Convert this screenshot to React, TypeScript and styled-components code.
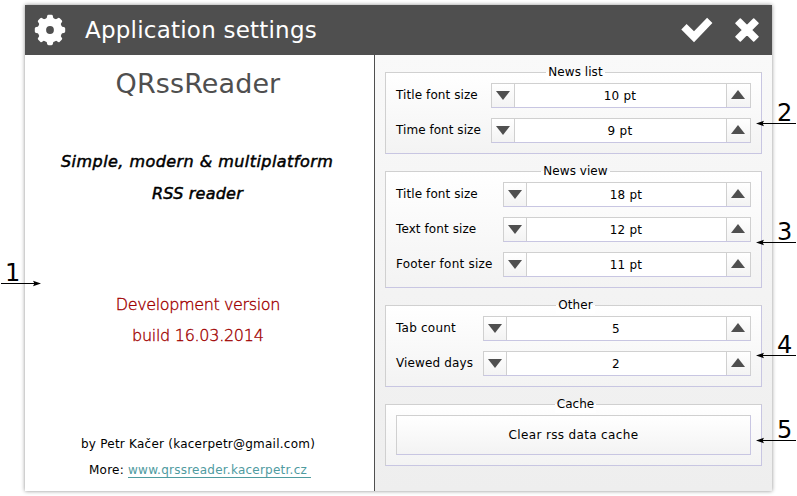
import React from "react";
import styled, { createGlobalStyle } from "styled-components";

const GlobalStyle = createGlobalStyle`
  * { box-sizing: border-box; }
  html, body { margin: 0; padding: 0; background: #fff; overflow: hidden; }
  body { font-family: "DejaVu Sans", sans-serif; font-size: 12px; color: #000; }
`;

const Page = styled.div`
  position: relative;
  width: 797px;
  height: 496px;
  padding: 5px 25px;
`;

const Window = styled.main`
  width: 747px;
  height: 486px;
  display: flex;
  flex-direction: column;
  box-shadow: 0 0 4px rgba(0, 0, 0, 0.45);
`;

const Header = styled.header`
  height: 50px;
  flex: none;
  display: flex;
  align-items: center;
  background: #4f4f4f;
  padding: 0 12px 0 9px;
`;

const Title = styled.h1`
  flex: 1;
  margin: 0 0 0 19px;
  color: #fff;
  font-size: 23px;
  line-height: 50px;
  font-weight: 400;
  white-space: nowrap;
  letter-spacing: 0.22px;
`;

const HeaderActions = styled.div`
  display: flex;
  align-items: center;
  gap: 21px;
`;

const Body = styled.div`
  flex: 1;
  display: flex;
`;

const About = styled.section`
  width: 350px;
  background: #fff;
  border-right: 1px solid #4f4f4f;
  display: flex;
  flex-direction: column;
`;

const AboutLine = styled.p<{
  $size: number;
  $height: number;
  $left: number;
  $top?: number;
  $color?: string;
  $spacing?: number;
  $variant?: "slogan" | "light";
}>`
  margin: ${(p) => p.$top ?? 0}px 0 0;
  padding-left: ${(p) => p.$left}px;
  font-size: ${(p) => p.$size}px;
  line-height: ${(p) => p.$height}px;
  height: ${(p) => p.$height}px;
  color: ${(p) => p.$color ?? "#000"};
  letter-spacing: ${(p) => p.$spacing ?? 0}px;
  font-style: ${(p) => (p.$variant === "slogan" ? "italic" : "normal")};
  font-weight: ${(p) => (p.$variant === "light" ? 200 : 400)};
  -webkit-text-stroke: ${(p) => (p.$variant === "slogan" ? "0.5px" : p.$variant === "light" ? "0.35px" : "0")};
  white-space: pre;
`;

const Link = styled.a`
  color: #4f9b9f;
  text-decoration: none;
  display: inline-block;
  height: 15px;
  line-height: 15px;
  border-bottom: 1px solid #4f9b9f;
  white-space: pre;
`;

const Settings = styled.section`
  flex: 1;
  background: linear-gradient(#f9f9f9, #eeeeee);
  padding: 17px 10px 0;
  display: flex;
  flex-direction: column;
  gap: 17px;
`;

const GroupBox = styled.section`
  border: 1px solid #d0d0d0;
  border-right-color: #c8c6e2;
  border-bottom-color: #c8c6e2;
  background: linear-gradient(#ffffff, #f3f3f3);
  padding: 0 10px 10px;
  display: flex;
  flex-direction: column;
  gap: 10px;
`;

const GroupTitle = styled.h2`
  align-self: center;
  margin: -9px 0 -8px;
  padding: 0 2px;
  height: 17px;
  font-size: 12px;
  line-height: 17px;
  font-weight: 400;
  letter-spacing: 0.05px;
  background: linear-gradient(transparent 8px, #fff 8px);
  transform: translateX(2px);
`;

const Row = styled.div`
  height: 25px;
  display: flex;
  justify-content: space-between;
`;

const Label = styled.label<{ $spacing: number }>`
  line-height: 25px;
  white-space: nowrap;
  letter-spacing: ${(p) => p.$spacing}px;
`;

const Spinner = styled.div<{ $width: number }>`
  width: ${(p) => p.$width}px;
  border: 1px solid #d0d0d0;
  border-bottom-color: #c8c6e2;
  background: #fff;
  display: flex;
`;

const Step = styled.button<{ $up?: boolean }>`
  width: ${(p) => (p.$up ? 24 : 23)}px;
  flex: none;
  border: 0 solid #d0d0d0;
  border-width: ${(p) => (p.$up ? "0 0 0 1px" : "0 1px 0 0")};
  background: linear-gradient(#ffffff, #f3f3f3);
  padding: ${(p) => (p.$up ? "0 1px 2px 0" : "0")};
  display: flex;
  align-items: center;
  justify-content: center;
`;

const Value = styled.output`
  flex: 1;
  text-align: center;
  line-height: 24px;
  letter-spacing: 0.25px;
  padding-right: 1px;
`;

const CacheButton = styled.button`
  height: 40px;
  padding: 0;
  border: 1px solid #d0d0d0;
  border-right-color: #c8c6e2;
  border-bottom-color: #c8c6e2;
  background: linear-gradient(#ffffff, #f3f3f3);
  font: 12px "DejaVu Sans", sans-serif;
  letter-spacing: 0.35px;
  color: #000;
`;

const Callout = styled.div<{ $x: number; $y: number }>`
  position: absolute;
  left: ${(p) => p.$x}px;
  top: ${(p) => p.$y - 24}px;
  width: 41px;
  height: 28px;
`;

const CalloutNumber = styled.span<{ $left: number }>`
  position: absolute;
  left: ${(p) => p.$left}px;
  top: 0;
  font-size: 24px;
  line-height: 28px;
`;

const Arrow = styled.svg<{ $flip?: boolean }>`
  position: absolute;
  left: 0;
  top: 21px;
  transform: ${(p) => (p.$flip ? "scaleX(-1)" : "none")};
`;

const GearIcon = () => (
  <svg width="32" height="32" viewBox="-16 -16 32 32" fill="#fff">
    <mask id="gear-hole">
      <rect x="-16" y="-16" width="32" height="32" fill="#fff" />
      <circle r="3.9" fill="#000" />
    </mask>
    <g mask="url(#gear-hole)">
      <circle r="12.2" />
      {[0, 45, 90, 135, 180, 225, 270, 315].map((a) => (
        <path
          key={a}
          transform={`rotate(${a})`}
          d="M-4 -11 Q-3 -12.2 -2.9 -13.8 Q-2.8 -15.2 -1.4 -15.2 H1.4 Q2.8 -15.2 2.9 -13.8 Q3 -12.2 4 -11Z"
        />
      ))}
    </g>
  </svg>
);

const CheckIcon = () => (
  <svg width="32" height="26" viewBox="0 0 32 26">
    <path d="M0.3 12.5 L5.6 7 L13 14.2 L26.1 0.8 L31.4 6.1 L13 25.2Z" fill="#fff" />
  </svg>
);

const CloseIcon = () => (
  <svg width="26" height="26" viewBox="0 0 26 26">
    <path
      d="M6.3 2 L13 8.7 L19.7 2 L24 6.3 L17.3 13 L24 19.7 L19.7 24 L13 17.3 L6.3 24 L2 19.7 L8.7 13 L2 6.3Z"
      fill="#fff"
      stroke="#fff"
      strokeWidth="1.6"
      strokeLinejoin="round"
    />
  </svg>
);

const Triangle = ({ up }: { up?: boolean }) => (
  <svg width="14" height="9" viewBox="0 0 14 9">
    <path d={up ? "M0 9 L7 0 L14 9Z" : "M0 0 H14 L7 9Z"} fill="#4f4f4f" />
  </svg>
);

type Field = { label: string; value: string; spacing: number };
type Group = { title: string; width: number; fields: Field[] };

const groups: Group[] = [
  {
    title: "News list",
    width: 260,
    fields: [
      { label: "Title font size", value: "10 pt", spacing: 0.09 },
      { label: "Time font size", value: "9 pt", spacing: 0.05 },
    ],
  },
  {
    title: "News view",
    width: 248,
    fields: [
      { label: "Title font size", value: "18 pt", spacing: 0.09 },
      { label: "Text font size", value: "12 pt", spacing: 0.09 },
      { label: "Footer font size", value: "11 pt", spacing: 0.23 },
    ],
  },
  {
    title: "Other",
    width: 268,
    fields: [
      { label: "Tab count", value: "5", spacing: 0.22 },
      { label: "Viewed days", value: "2", spacing: 0.14 },
    ],
  },
];

const callouts = [
  { n: 1, x: 1, y: 283 },
  { n: 2, x: 756, y: 123 },
  { n: 3, x: 756, y: 242 },
  { n: 4, x: 756, y: 355 },
  { n: 5, x: 756, y: 440 },
];

export default function App() {
  return (
    <>
      <GlobalStyle />
      <Page>
        <Window>
          <Header>
            <GearIcon />
            <Title>Application settings</Title>
            <HeaderActions>
              <CheckIcon />
              <CloseIcon />
            </HeaderActions>
          </Header>
          <Body>
            <About>
              <AboutLine $size={27} $height={34} $left={90.6} $top={12} $spacing={0.1} $color="#4f4f4f">QRssReader</AboutLine>
              <AboutLine $size={16} $height={32} $left={36} $top={45} $spacing={0.45} $variant="slogan">
                Simple, modern &amp; multiplatform
              </AboutLine>
              <AboutLine $size={16} $height={32} $left={127} $spacing={0.22} $variant="slogan">RSS reader</AboutLine>
              <AboutLine $size={16} $height={31} $left={90.8} $top={79} $spacing={-0.38} $color="#a00000" $variant="light">
                Development version
              </AboutLine>
              <AboutLine $size={16} $height={31} $left={107} $spacing={-0.28} $color="#a00000" $variant="light">
                build 16.03.2014
              </AboutLine>
              <AboutLine $size={12} $height={26} $left={56} $top={80} $spacing={0.24}>
                by Petr Kačer (kacerpetr@gmail.com)
              </AboutLine>
              <AboutLine $size={12} $height={26} $left={64} $spacing={0.24}>
                {"More: "}
                <Link href="#">{"www.qrssreader.kacerpetr.cz "}</Link>
              </AboutLine>
            </About>
            <Settings>
              {groups.map((g) => (
                <GroupBox key={g.title}>
                  <GroupTitle>{g.title}</GroupTitle>
                  {g.fields.map((f) => (
                    <Row key={f.label}>
                      <Label $spacing={f.spacing}>{f.label}</Label>
                      <Spinner $width={g.width}>
                        <Step aria-label="Decrease"><Triangle /></Step>
                        <Value>{f.value}</Value>
                        <Step $up aria-label="Increase"><Triangle up /></Step>
                      </Spinner>
                    </Row>
                  ))}
                </GroupBox>
              ))}
              <GroupBox>
                <GroupTitle>Cache</GroupTitle>
                <CacheButton>Clear rss data cache</CacheButton>
              </GroupBox>
            </Settings>
          </Body>
        </Window>
        {callouts.map((c) => (
          <Callout key={c.n} $x={c.x} $y={c.y}>
            <CalloutNumber $left={c.n === 1 ? 4 : 21}>{c.n}</CalloutNumber>
            <Arrow $flip={c.n === 1} width="40" height="7" viewBox="0 0 40 7">
              <path d="M3 3h37v1H3zM0 3.5L8 .8L6.6 3.5L8 6.2Z" fill="#000" />
            </Arrow>
          </Callout>
        ))}
      </Page>
    </>
  );
}
